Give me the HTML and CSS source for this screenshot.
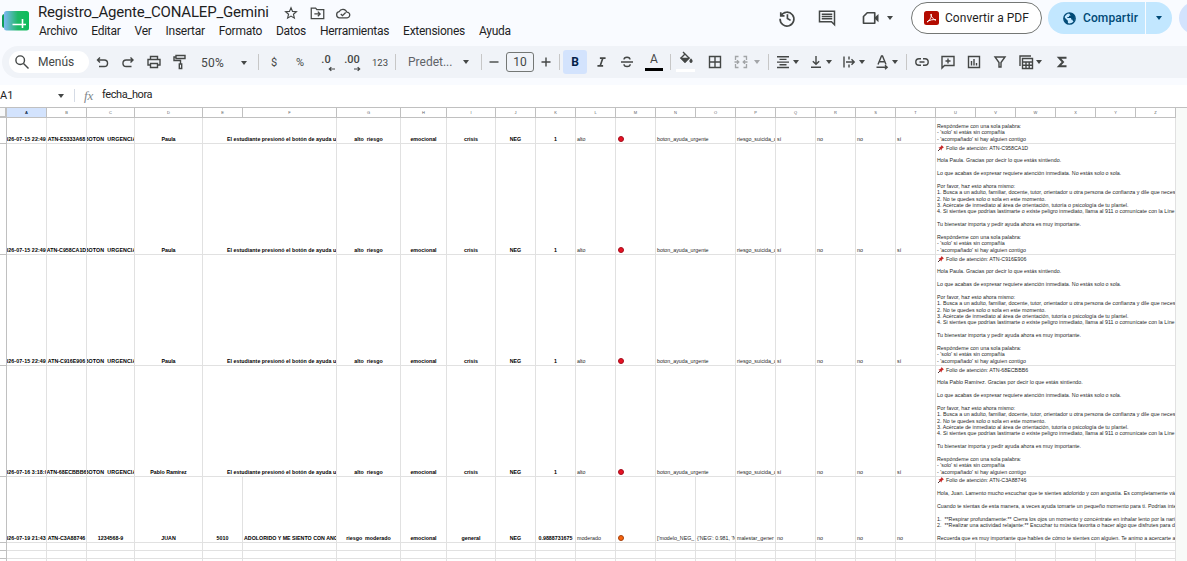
FILE: index.html
```
<!DOCTYPE html>
<html lang="es">
  <head>
    <meta charset="UTF-8" />
    <meta name="viewport" content="width=device-width, initial-scale=1.0" />
    <title>Registro_Agente_CONALEP_Gemini</title>
    <link rel="stylesheet" href="styles.css">
  </head>
  <body>
    <header>
      <svg class="logo" width="27" height="20" viewBox="0 0 27 20">
        <defs>
          <linearGradient id="lg" x1="0" x2="1">
            <stop offset="0" stop-color="#7db8f5" />
            <stop offset="0.55" stop-color="#1fb866" />
            <stop offset="1" stop-color="#0bbd5a" />
          </linearGradient>
        </defs>
        <rect x="0" y="3" width="8" height="14" rx="2.5" fill="#0f9d58" />
        <rect x="2" y="0" width="25" height="19.5" rx="2.5" fill="url(#lg)" />
        <path d="M10.5 13.5H24M20.5 8v9" stroke="#fff" stroke-width="1.6" />
      </svg>
      <div class="heading">
        <div class="title-row">
          <h1>Registro_Agente_CONALEP_Gemini</h1>
          <svg class="star" width="14" height="14" viewBox="0 0 24 24"><path d="M12 3l2.6 6.2 6.7.6-5.1 4.4 1.6 6.6L12 17.3l-5.8 3.5 1.6-6.6-5.1-4.4 6.7-.6z" fill="none" stroke="#444746" stroke-width="2" /></svg>
          <svg class="folder" width="15" height="14" viewBox="0 0 24 22"><path d="M2 3h7l2 2.500h11V20H2zM7 12.500h9M12.500 8.800l3.700 3.700-3.700 3.700" fill="none" stroke="#444746" stroke-width="2" /></svg>
          <svg class="cloud" width="16" height="14" viewBox="0 0 24 22"><path d="M18.500 18.500H6.500a4.800 4.800 0 0 1-.6-9.500A6.500 6.500 0 0 1 18 9.700a4.400 4.400 0 0 1 .5 8.800zM8.500 12.500l2.700 2.700 5-5" fill="none" stroke="#444746" stroke-width="2" /></svg>
        </div>
        <nav>
          <a>Archivo</a><a>Editar</a><a>Ver</a><a>Insertar</a><a>Formato</a><a>Datos</a><a>Herramientas</a><a>Extensiones</a><a>Ayuda</a>
        </nav>
      </div>
      <div class="actions">
        <svg class="history" width="20" height="20" viewBox="0 0 24 24"><path d="M4.500 5v4.500H9M4.800 9.200A8.300 8.300 0 1 1 3.700 13M12.500 7.500v5l3.800 2.400" fill="none" stroke="#444746" stroke-width="2" /></svg>
        <svg class="comments" width="18" height="18" viewBox="0 0 24 24"><path d="M2 3h20v18l-4-4H2z" fill="none" stroke="#444746" stroke-width="2" /><path d="M5 7h14M5 10h14M5 13h14" stroke="#444746" stroke-width="1.800" /></svg>
        <svg class="camera" width="18" height="18" viewBox="0 0 24 24"><path d="M7 5h10v14H2V10z" fill="none" stroke="#444746" stroke-width="2.200" stroke-linejoin="round" /><path d="M16 12l6-5.500v11z" fill="#444746" /></svg>
        <i class="arrow"></i>
        <button class="pdf">
          <svg width="15" height="14" viewBox="0 0 15 14"><rect width="15" height="14" rx="2.500" fill="#b30b00" /><path d="M3 11C5.500 9.500 8 6 7.200 3 6.300 3 7.500 8 12 9 9.500 8 5 9 3 11z" fill="none" stroke="#fff" stroke-width="1" /></svg>
          Convertir a PDF
        </button>
        <div class="share">
          <button class="share-main">
            <svg width="13" height="13" viewBox="0 0 24 24"><circle cx="12" cy="12" r="10.500" fill="none" stroke="#004a77" stroke-width="2.500" /><path d="M2 9l7 7v5C4 20 1 14 2 9zM11 2l5 0c3 1 6 5 6 9 0 3-1 5-3 7l-2-4h-2v-3H8V9h3V7h3z" fill="#004a77" /></svg>
            Compartir
          </button>
          <button class="share-more"><i class="arrow"></i></button>
        </div>
        <span class="avatar"></span>
      </div>
    </header>

    <div class="toolbar">
      <div class="search">
        <svg width="14" height="14" viewBox="0 0 16 16"><circle cx="6.200" cy="6.200" r="4.300" /><path d="M9.500 9.500l5 5" /></svg>
        Menús
      </div>
      <span class="tb"><svg viewBox="0 0 16 16"><path d="M6 3.500L3.500 6 6 8.500M3.500 6h6.800a3 3 0 0 1 0 6.500H5" /></svg></span>
      <span class="tb"><svg viewBox="0 0 16 16"><path d="M10.500 3.500L13 6l-2.500 2.500M13 6H6.200a3 3 0 0 0 0 6.500h5.300" /></svg></span>
      <span class="tb"><svg viewBox="0 0 16 16"><path d="M4.500 5V2.500h7V5M4 11H2V5.500h12V11h-2M4.500 9.500h7v4h-7z" /></svg></span>
      <span class="tb"><svg viewBox="0 0 16 16"><path d="M4 1.500h9v3H4zM4 3H2v3.500h6.500V10M7.300 10h2.400v4.500H7.300z" /></svg></span>
      <span class="zoom">50%<i class="arrow"></i></span>
      <span class="sep"></span>
      <span class="tb txt first">$</span>
      <span class="tb txt">%</span>
      <span class="tb dec">.0<svg viewBox="0 0 8 6"><path d="M8 3H1.500M3.800.8L1.500 3l2.300 2.200" /></svg></span>
      <span class="tb dec">.00<svg viewBox="0 0 8 6"><path d="M0 3h6.500M4.200.8L6.500 3 4.200 5.200" /></svg></span>
      <span class="tb num">123</span>
      <span class="sep"></span>
      <span class="font">Predet...<i class="arrow"></i></span>
      <span class="sep"></span>
      <span class="tb minus"><svg viewBox="0 0 16 16"><path d="M3.500 8h9" /></svg></span>
      <span class="size">10</span>
      <span class="tb plus"><svg viewBox="0 0 16 16"><path d="M3.500 8h9M8 3.500v9" /></svg></span>
      <span class="sep wide"></span>
      <span class="bold">B</span>
      <span class="tb italic"><svg viewBox="0 0 16 16"><path d="M6 3.200h7M3 12.800h7M9.700 3.200L6.300 12.800" stroke-width="2" /></svg></span>
      <span class="tb"><svg viewBox="0 0 16 16"><path d="M2 8h12M11 5.500C11 2.500 5 2.500 5 5.500M5 10.300c0 3 6.200 3 6.200 0" /></svg></span>
      <span class="tb color">A</span>
      <span class="sep late"></span>
      <span class="tb fill"><svg viewBox="0 0 16 16"><path d="M5 1l6 6-4 4-4-4 4-4" /><path d="M3.500 7.500h7L7 11z" fill="#444746" /><path d="M13 8.500c1 1.300 1.500 2 0 2.800-1.500-.8-1-1.500 0-2.800z" fill="#444746" /></svg></span>
      <span class="tb borders"><svg viewBox="0 0 16 16"><path d="M2.500 2.500h11v11h-11zM8 2.500v11M2.500 8h11" /></svg></span>
      <span class="tb faded"><svg viewBox="0 0 16 16"><path d="M5.500 2.500h-3V6M10.500 2.500h3V6M5.500 13.500h-3V10M10.500 13.500h3V10M1.500 8h4M4 6.200L5.800 8 4 9.800M14.500 8h-4M12 6.200L10.200 8 12 9.800" stroke-width="1.300" /></svg></span>
      <i class="arrow faded"></i>
      <span class="sep after-merge"></span>
      <span class="drop"><svg viewBox="0 0 16 16"><path d="M2 2.700h12M4.500 5.400h7M2 8.100h12M4.500 10.800h7M2 13.500h12" /></svg><i class="arrow"></i></span>
      <span class="drop"><svg viewBox="0 0 16 16"><path d="M8 2v8M4.800 7.200L8 10.300l3.200-3.100M3 13.200h10" /></svg><i class="arrow"></i></span>
      <span class="drop"><svg viewBox="0 0 16 16"><path d="M3 2.500v11M8 2.500v3M8 10.500v3M5 8h8M10.500 5.300L13.200 8l-2.700 2.700" /></svg><i class="arrow"></i></span>
      <span class="drop"><svg viewBox="0 0 16 16"><path d="M4 10.500L7.500 2h1L12 10.500M5.200 7.800h5.600M2.500 13.200h10M11 11.200l2.200 2-2.200 2" /></svg><i class="arrow"></i></span>
      <span class="sep before-link"></span>
      <span class="tb link"><svg viewBox="0 0 16 16"><path d="M7 4.800H5a3.200 3.200 0 0 0 0 6.400h2M9 4.800h2a3.200 3.200 0 0 1 0 6.400H9M5.500 8h5" /></svg></span>
      <span class="tb"><svg viewBox="0 0 16 16"><path d="M2 2.500h12v9H4.500L2 14zM8 4.500v5M5.500 7h5" /></svg></span>
      <span class="tb"><svg viewBox="0 0 16 16"><path d="M2.500 2.500h11v11h-11zM5.500 7v4.500M8 5v6.500M10.500 9v2.500" /></svg></span>
      <span class="tb"><svg viewBox="0 0 16 16"><path d="M3 3h10L9 8.500V13H7V8.500z" /></svg></span>
      <span class="drop views"><svg viewBox="0 0 16 16"><path d="M2 12V2h11M4.500 4.500h10v10h-10zM4.500 8h10M4.500 11.200h10M8 8v6.500M11.200 8v6.500" /></svg><i class="arrow"></i></span>
      <span class="tb sum"><svg viewBox="0 0 16 16"><path d="M12.500 3.700H5L9 8l-4 4.300h7.500" stroke-width="2" /></svg></span>
    </div>

    <div class="formula-bar">
      <span class="name-box">A1<i class="arrow"></i></span>
      <span class="fx">fx</span>
      <span class="formula">fecha_hora</span>
    </div>

    <div class="sheet" id="sheet"></div>

    <script>
      const sheet = document.getElementById("sheet");

      const pin = `<svg class="pin" viewBox="0 0 12 12"><path d="M7 0l5 5-2 .5-2.500 2.500-.5 3L1 5l3-.5L6.500 2z" fill="#c62828" /><path d="M4 8L0 12" stroke="#3c2020" stroke-width="1.800" /></svg>`;

      const plan = (folio, name) => `${pin}Folio de atención: ${folio}

Hola ${name}. Gracias por decir lo que estás sintiendo.

Lo que acabas de expresar requiere atención inmediata. No estás solo o sola.

Por favor, haz esto ahora mismo:
1. Busca a un adulto, familiar, docente, tutor, orientador u otra persona de confianza y dile que neces
2. No te quedes solo o sola en este momento.
3. Acércate de inmediato al área de orientación, tutoría o psicología de tu plantel.
4. Si sientes que podrías lastimarte o existe peligro inmediato, llama al 911 o comunícate con la Líne

Tu bienestar importa y pedir ayuda ahora es muy importante.

Respóndeme con una sola palabra:
- 'solo' si estás sin compañía
- 'acompañado' si hay alguien contigo`;

      const juan = `${pin}Folio de atención: ATN-C3A88746

Hola, Juan. Lamento mucho escuchar que te sientes adolorido y con angustia. Es completamente vá

Cuando te sientas de esta manera, a veces ayuda tomarte un pequeño momento para ti. Podrías inte

1.  **Respirar profundamente:** Cierra los ojos un momento y concéntrate en inhalar lento por la nari
2.  **Realizar una actividad relajante:** Escuchar tu música favorita o hacer algo que disfrutes para d

Recuerda que es muy importante que hables de cómo te sientes con alguien. Te animo a acercarte a`;

      const rows = [
        { h: 26, date: "026-07-15 22:49:", id: "ATN-E5333A68", name: "Paula", msg: plan("ATN-E5333A68", "Paula") },
        { h: 111, date: "026-07-15 22:49:", id: "ATN-C958CA1D", name: "Paula", msg: plan("ATN-C958CA1D", "Paula") },
        { h: 111, date: "026-07-15 22:49:", id: "ATN-C916E906", name: "Paula", msg: plan("ATN-C916E906", "Paula") },
        { h: 111, date: "026-07-16 3:18:0", id: "ATN-68ECBBB6", name: "Pablo Ramírez", msg: plan("ATN-68ECBBB6", "Pablo Ramírez") },
      ];

      const cell = (text, cls = "", span = 1) =>
        `<div class="cell ${cls}" style="grid-column: span ${span}"><span>${text}</span></div>`;

      let html = `<div class="row head"><div class="gutter"></div>`;
      "ABCDEFGHIJKLMNOPQRSTUVWXYZ".split("").forEach((letter) => {
        html += `<div class="col">${letter}</div>`;
      });
      html += `</div>`;

      rows.forEach((r) => {
        html += `<div class="row" style="height: ${r.h}px"><div class="gutter"></div>`;
        html += cell(r.date, "b date") + cell(r.id, "b") + cell("BOTON&nbsp;&nbsp;URGENCIA", "b date") + cell(r.name, "b");
        html += cell("El estudiante presionó el botón de ayuda u", "b student", 2);
        html += cell("alto&nbsp;&nbsp;riesgo", "b") + cell("emocional", "b") + cell("crisis", "b") + cell("NEG", "b") + cell("1", "b");
        html += cell("alto") + cell(`<i class="dot"></i>`) + cell("boton_ayuda_urgente", "", 2) + cell("riesgo_suicida_a");
        html += cell("sí") + cell("no") + cell("no") + cell("sí") + cell(r.msg, "msg", 6) + `</div>`;
      });

      html += `<div class="row" style="height: 66px"><div class="gutter"></div>`;
      html += cell("026-07-19 21:43:", "b date") + cell("ATN-C3A88746", "b") + cell("1234568-9", "b") + cell("JUAN", "b") + cell("5010", "b");
      html += cell("ADOLORIDO Y ME SIENTO CON ANG", "b left") + cell("riesgo&nbsp;&nbsp;moderado", "b") + cell("emocional", "b") + cell("general", "b");
      html += cell("NEG", "b") + cell("0.9888731675", "b") + cell("moderado") + cell(`<i class="dot orange"></i>`);
      html += cell("['modelo_NEG_") + cell("{'NEG': 0.981, 'N") + cell("malestar_gener");
      html += cell("no") + cell("no") + cell("no") + cell("no") + cell(juan, "msg", 6) + `</div>`;

      for (let i = 0; i < 3; i++) {
        html += `<div class="row" style="height: 8px"><div class="gutter"></div>` + cell("").repeat(26) + `</div>`;
      }
      sheet.innerHTML = html;
    </script>
  </body>
</html>
```
FILE: styles.css
```
* {
  box-sizing: border-box;
}
body {
  margin: 0;
  height: 561px;
  overflow: hidden;
  background-color: #f9fbff;
  color: #1f1f1f;
  font-family: Roboto, "Liberation Sans", sans-serif;
  font-size: 12px;
}
svg {
  display: block;
  flex: none;
}
button {
  border: none;
  padding: 0;
  font-family: inherit;
}
.arrow {
  flex: none;
  width: 0;
  height: 0;
  border: 3.5px solid transparent;
  border-top: 4px solid #444746;
  border-bottom: none;
}

header {
  display: flex;
  height: 46px;
}
.logo {
  margin: 11px 0 0 2px;
}
.heading {
  margin-left: 9px;
  padding-top: 3px;
}
.title-row {
  display: flex;
  align-items: center;
  height: 20px;
}
h1 {
  margin: 0;
  width: 232px;
  font-size: 15px;
  font-weight: 400;
  line-height: 19px;
  height: 20px;
  letter-spacing: -0.2px;
  white-space: nowrap;
}
.star {
  margin-left: 14px;
}
.folder {
  margin-left: 12px;
}
.cloud {
  margin-left: 10px;
}
nav {
  display: flex;
  gap: 14px;
  margin-left: 1px;
  line-height: 16px;
  letter-spacing: -0.27px;
}
.actions {
  display: flex;
  align-items: center;
  height: 36px;
  margin-left: auto;
  width: 410px;
  flex: none;
}
.actions > * {
  flex: none;
}
.comments {
  margin-left: 21px;
}
.camera {
  margin: 0 7px 0 26px;
}
.pdf {
  display: flex;
  align-items: center;
  gap: 6px;
  width: 131px;
  height: 32px;
  margin-left: 18px;
  padding-left: 12px;
  border: 1px solid #747775;
  border-radius: 16px;
  background-color: #fff;
  color: #1f1f1f;
  font-size: 12px;
  font-weight: 400;
  letter-spacing: 0.05px;
  white-space: nowrap;
}
.share {
  display: flex;
  margin-left: 6px;
}
.share button {
  display: flex;
  align-items: center;
  height: 32px;
  background-color: #c2e7ff;
  color: #004a77;
}
.share .share-main {
  gap: 7px;
  width: 97px;
  padding-left: 15px;
  border-radius: 16px 0 0 16px;
  font-size: 12px;
  font-weight: 500;
  letter-spacing: 0.1px;
}
.share .share-more {
  justify-content: center;
  width: 26px;
  margin-left: 1px;
  border-radius: 0 16px 16px 0;
}
.share-more .arrow {
  border-top-color: #004a77;
}
.avatar {
  width: 32px;
  height: 32px;
  margin-left: 7px;
  border-radius: 50%;
  background-color: #d3e3fd;
}

.toolbar {
  display: flex;
  align-items: center;
  height: 32px;
  margin-left: 2px;
  padding-left: 7px;
  border-radius: 16px 0 0 16px;
  background-color: #f0f3f8;
  color: #444746;
  white-space: nowrap;
}
.toolbar > * {
  flex: none;
}
.toolbar svg {
  width: 16px;
  height: 16px;
  fill: none;
  stroke: #444746;
  stroke-width: 1.4;
}
.search {
  display: flex;
  align-items: center;
  gap: 8px;
  width: 80px;
  height: 22px;
  padding-left: 5px;
  border-radius: 11px;
  background-color: #fff;
}
.tb {
  display: flex;
  align-items: center;
  justify-content: center;
  width: 26px;
  height: 24px;
}
.zoom,
.font {
  display: flex;
  align-items: center;
  justify-content: space-between;
  width: 65px;
  padding: 2px 11px 0 8px;
  letter-spacing: 0.3px;
}
.font {
  width: 85px;
  padding: 0 12px;
  color: #5f6368;
  letter-spacing: 0;
}
.sep {
  width: 1px;
  height: 16px;
  background-color: #c7c7c7;
}
.first {
  margin-left: 2px;
}
.txt {
  font-size: 11px;
}
.dec {
  position: relative;
  align-items: flex-start;
  padding-top: 3px;
  font-size: 11px;
  font-weight: 500;
  line-height: 13px;
}
.toolbar .dec svg {
  position: absolute;
  right: 4px;
  bottom: 2px;
  width: 7px;
  height: 6px;
}
.num {
  width: 30px;
  font-size: 9.5px;
}
.minus {
  width: 24px;
}
.size {
  width: 28px;
  height: 20px;
  border: 1px solid #747775;
  border-radius: 3px;
  line-height: 18px;
  text-align: center;
}
.plus {
  width: 24px;
}
.wide {
  margin: 0 3px 0 1px;
}
.bold {
  width: 24px;
  height: 24px;
  border-radius: 3px;
  background-color: #d3e3fd;
  color: #041e49;
  font-weight: 700;
  line-height: 25px;
  text-align: center;
}
.toolbar .italic svg {
  width: 13px;
}
.italic {
  margin-left: 1px;
}
.color {
  width: 18px;
  height: 17px;
  margin-left: 5px;
  padding-bottom: 4px;
  border-bottom: 3px solid #000;
}
.late {
  margin-left: 7px;
}
.fill {
  width: 19px;
  height: 19px;
  margin: 0 7px 0 5px;
  padding-bottom: 4px;
  border-bottom: 3px solid #fff;
}
.faded {
  opacity: 0.45;
}
.after-merge {
  margin-left: 8px;
}
.drop {
  display: flex;
  align-items: center;
  gap: 2px;
  width: 33px;
  padding-left: 6px;
}
.before-link {
  margin: 0 2px 0 5px;
}
.views {
  margin-left: -1px;
}
.sum {
  margin-left: 4px;
}

.formula-bar {
  display: flex;
  align-items: center;
  height: 22px;
  margin-top: 7px;
  padding-bottom: 1px;
  background-color: #fff;
  font-size: 11px;
}
.name-box {
  display: flex;
  align-items: center;
  justify-content: space-between;
  width: 75px;
  height: 13px;
  padding-right: 10px;
  border-right: 1px solid #d5dbe5;
}
.fx {
  width: 27px;
  padding-left: 9px;
  color: #80868b;
  font-family: "Liberation Serif", serif;
  font-size: 13px;
  font-style: italic;
}
.formula {
  padding-bottom: 2px;
  letter-spacing: -0.4px;
}

.sheet {
  width: 1187px;
  height: 454px;
  overflow: hidden;
  border-top: 1px solid #c0c0c0;
  background-color: #f8faf8;
  font-family: "Liberation Sans", Arial, sans-serif;
  font-size: 5.3px;
}
.row {
  display: grid;
  grid-template-columns: 7px 40px 40px 48px 68px 40px 94px 64px 46px 49px repeat(17, 40px);
  width: 1176px;
  background-color: #fff;
}
.gutter {
  border-right: 1px solid #c0c0c0;
  border-bottom: 1px solid #c0c0c0;
}
.head {
  height: 10px;
}
.head .gutter {
  border-right-width: 2px;
  border-bottom-width: 2px;
  background-color: #f8f9fa;
}
.col {
  border-right: 1px solid #c0c0c0;
  border-bottom: 1px solid #c0c0c0;
  color: #575b5f;
  font-size: 4px;
  line-height: 9px;
  text-align: center;
}
.col:nth-child(2) {
  background-color: #d3e3fd;
  color: #041e49;
  font-weight: 700;
}
.cell {
  display: flex;
  align-items: flex-end;
  min-width: 0;
  overflow: hidden;
  padding: 0 0 1px 1px;
  border-right: 1px solid #e1e1e1;
  border-bottom: 1px solid #e1e1e1;
  line-height: 6.38px;
  white-space: pre;
}
.msg {
  letter-spacing: 0.015px;
}
.b {
  justify-content: center;
  padding-left: 0;
  color: #000;
  font-weight: 700;
}
.b span {
  flex: none;
}
.date {
  letter-spacing: 0.1px;
}
.left {
  justify-content: flex-start;
  padding-left: 1px;
}
.student {
  justify-content: flex-start;
  padding-left: 24px;
  letter-spacing: 0.03px;
}
.dot {
  display: block;
  width: 6px;
  height: 6px;
  margin-left: 1px;
  border: 1px solid #a30d1c;
  border-radius: 50%;
  background-color: #e81224;
}
.orange {
  border-color: #a4400c;
  background-color: #f7630c;
}
/* pushpin in front of the folio */
.pin {
  display: inline-block;
  width: 6px;
  height: 6px;
  margin: -1px 2px -1px 1px;
}
```
